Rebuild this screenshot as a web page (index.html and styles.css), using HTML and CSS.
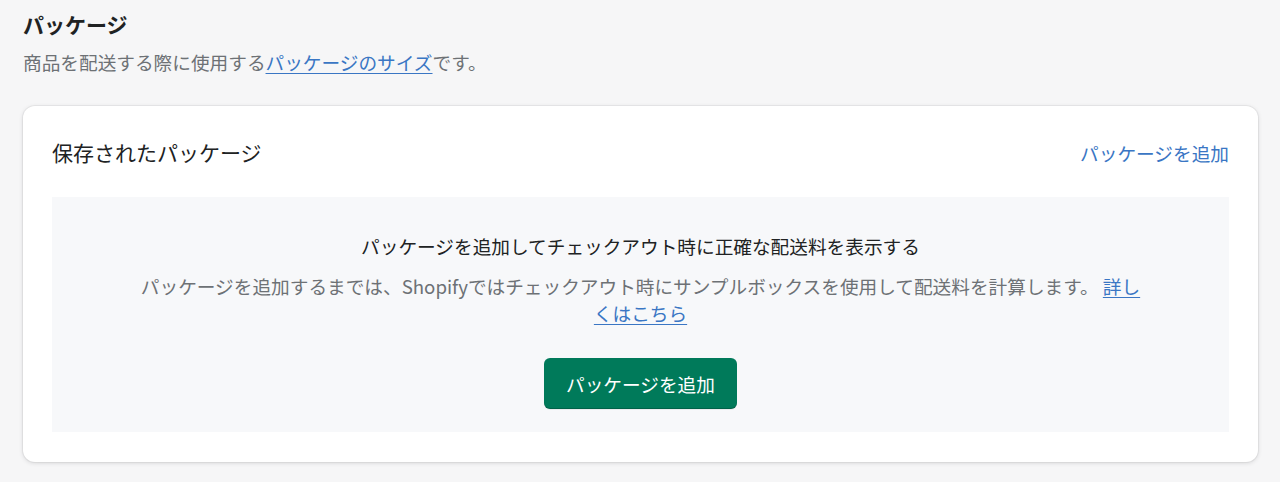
FILE: index.html
```html
<!DOCTYPE html>
<html lang="ja">

<head>
    <meta charset="UTF-8">
    <meta name="viewport" content="width=device-width, initial-scale=1.0">
    <title>パッケージ</title>
    <link rel="stylesheet" href="styles.css">
</head>

<body>
    <div class="page">
        <h1 class="page-title">パッケージ</h1>
        <p class="page-desc">商品を配送する際に使用する<a href="#">パッケージのサイズ</a>です。</p>

        <div class="card">
            <div class="card-header">
                <h2 class="card-title">保存されたパッケージ</h2>
                <a class="card-action" href="#">パッケージを追加</a>
            </div>

            <!-- パッケージがまだ無い時の表示 -->
            <div class="empty-state">
                <h3 class="empty-title">パッケージを追加してチェックアウト時に正確な配送料を表示する</h3>
                <p class="empty-text">パッケージを追加するまでは、Shopifyではチェックアウト時にサンプルボックスを使用して配送料を計算します。 <a href="#">詳しくはこちら</a></p>
                <button class="btn-primary">パッケージを追加</button>
            </div>
        </div>
    </div>
</body>

</html>
```

FILE: styles.css
```css
* {
    margin: 0;
    padding: 0;
    box-sizing: border-box;
}

body {
    background: #f6f6f7;
    color: #202223;
    font-family: "Noto Sans CJK JP", "Noto Sans", sans-serif;
    font-size: 18.67px;
    line-height: 27px;
}

.page {
    padding: 10px 22px 20px 23px;
}

.page-title {
    font-size: 21px;
    font-weight: 600;
    line-height: 28px;
}

.page-desc {
    margin-top: 10px;
    color: #6d7175;
}

a {
    color: #3a76c4;
    text-decoration: underline;
    text-underline-offset: 3px;
}

.card {
    margin-top: 31px;
    background: #fff;
    border-radius: 12px;
    box-shadow: 0 0 0 1px rgba(63, 63, 68, 0.05), 0 1px 4px rgba(63, 63, 68, 0.18);
    padding: 30px 29px 30px 29px;
}

.card-header {
    display: flex;
    justify-content: space-between;
    align-items: center;
    height: 32px;
}

.card-title {
    font-size: 21px;
    font-weight: 400;
    line-height: 32px;
    color: #202223;
}

.card-action {
    text-decoration: none;
}

.empty-state {
    margin-top: 29px;
    background: #f7f8fa;
    padding: 35px 20px 23px;
    text-align: center;
}

.empty-title {
    font-size: 18.67px;
    font-weight: 400;
    line-height: 27px;
}

.empty-text {
    max-width: 1000px;
    margin: 13px auto 0;
    color: #6d7175;
}

.btn-primary {
    margin-top: 32px;
    height: 51px;
    padding: 0 22px;
    border: 0;
    border-radius: 6px;
    background: #007a5a;
    color: #fff;
    font-family: inherit;
    font-size: 18.67px;
    font-weight: 400;
    box-shadow: inset 0 -1px 0 rgba(0, 0, 0, 0.2), 0 1px 0 rgba(0, 0, 0, 0.05);
    cursor: pointer;
}
```
